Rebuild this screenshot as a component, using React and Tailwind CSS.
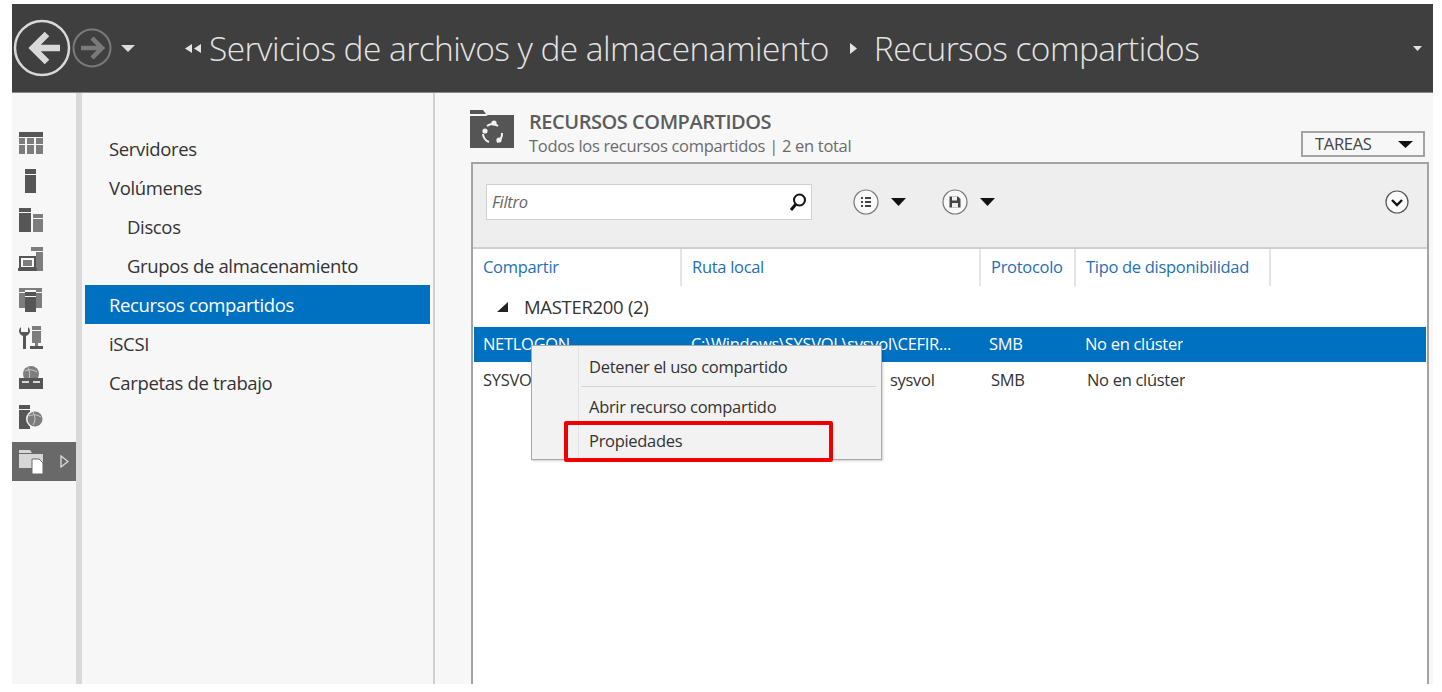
import React from "react";

const font = { fontFamily: '"Open Sans", "Noto Sans", sans-serif' };

function Back() {
  return (
    <svg width="58" height="58" viewBox="0 0 58 58" className="shrink-0">
      <circle cx="29" cy="29" r="27" fill="none" stroke="#d8d8d8" strokeWidth="2.5" />
      <path d="M34 15 L20 29 L34 43 M20 29 H47" fill="none" stroke="#d8d8d8" strokeWidth="6.5" />
    </svg>
  );
}
function Forward() {
  return (
    <svg width="40" height="40" viewBox="0 0 40 40" className="shrink-0">
      <circle cx="20" cy="20" r="18.5" fill="none" stroke="#7a7a7a" strokeWidth="2" />
      <path d="M20 10 L30 20 L20 30 M30 20 H9" fill="none" stroke="#7a7a7a" strokeWidth="4.5" />
    </svg>
  );
}
function Tri({ w = 14, h = 7, color = "#111", className = "" }) {
  return (
    <svg width={w} height={h} viewBox="0 0 14 7" preserveAspectRatio="none" className={"shrink-0 " + className}>
      <path d="M0 0H14L7 7Z" fill={color} />
    </svg>
  );
}
const G1 = "#565656", G2 = "#7d7d7d";
const sideIcons = [
  <g key="a">
    <rect x="0" y="0" width="24" height="5" fill={G1} />
    <rect x="0" y="6" width="6" height="6" fill={G2} /><rect x="8" y="6" width="7" height="6" fill={G2} /><rect x="17" y="6" width="7" height="6" fill={G2} />
    <rect x="0" y="13" width="6" height="9" fill={G2} /><rect x="8" y="13" width="7" height="9" fill={G2} /><rect x="17" y="13" width="7" height="9" fill={G2} />
  </g>,
  <g key="b">
    <rect x="6" y="0" width="11" height="5" fill={G1} /><rect x="6" y="6" width="11" height="18" fill={G1} />
  </g>,
  <g key="c">
    <rect x="0" y="0" width="12" height="4" fill={G1} /><rect x="0" y="5" width="12" height="19" fill={G1} />
    <rect x="14" y="6" width="10" height="4" fill={G2} /><rect x="14" y="11" width="10" height="13" fill={G2} />
  </g>,
  <g key="d">
    <rect x="12" y="0" width="12" height="4" fill={G2} /><rect x="17" y="5" width="7" height="19" fill={G2} />
    <rect x="1" y="10" width="15" height="11" fill="none" stroke={G1} strokeWidth="2" />
    <rect x="4" y="13" width="9" height="6" fill={G2} /><rect x="-1" y="21" width="19" height="3" fill={G1} />
  </g>,
  <g key="e">
    <rect x="0" y="1" width="6" height="4" fill={G2} /><rect x="0" y="6" width="6" height="15" fill={G2} />
    <rect x="17" y="1" width="6" height="4" fill={G2} /><rect x="17" y="6" width="6" height="15" fill={G2} />
    <rect x="6" y="1" width="11" height="2" fill={G2} />
    <rect x="6" y="5" width="11" height="4" fill={G1} /><rect x="6" y="10" width="11" height="15" fill={G1} />
  </g>,
  <g key="f">
    <path d="M2 1 a5 5 0 0 0 0 8 l2 1 v13 h3 V10 l2 -1 a5 5 0 0 0 0 -8 v5 h-7z" fill={G1} />
    <rect x="13" y="0" width="9" height="4" fill={G2} /><rect x="13" y="5" width="9" height="12" fill={G2} />
    <rect x="16" y="17" width="3" height="3" fill={G2} /><rect x="11" y="20" width="13" height="3" fill={G1} />
  </g>,
  <g key="g">
    <circle cx="12" cy="9" r="8" fill={G2} /><path d="M6 6 Q12 3 18 7 M9 2 Q12 9 10 15" fill="none" stroke="#c8c8c8" strokeWidth="1" />
    <rect x="0" y="13" width="24" height="11" fill={G1} />
    <rect x="3" y="16" width="7" height="2" fill="#d8d8d8" /><rect x="14" y="16" width="7" height="2" fill="#d8d8d8" />
  </g>,
  <g key="h">
    <rect x="0" y="0" width="11" height="4" fill={G1} /><rect x="0" y="5" width="11" height="19" fill={G1} />
    <circle cx="16" cy="14" r="9" fill="#f7f7f7" /><circle cx="16" cy="14" r="7.5" fill={G2} />
    <path d="M10 11 Q16 8 22 12 M14 7 Q18 14 14 20" fill="none" stroke="#c8c8c8" strokeWidth="1" />
  </g>,
];
const tops = ["mt-[39px]", "mt-[13px]", "mt-[15px]", "mt-[15px]", "mt-[16px]", "mt-[15px]", "mt-[15px]", "mt-[16px]"];

function Sidebar() {
  return (
    <div className="w-[64px] shrink-0 bg-[#f7f7f7] flex flex-col">
      {sideIcons.map((ic, i) => (
        <svg key={i} width="24" height="24" viewBox="0 0 24 24" className={"ml-[7px] shrink-0 overflow-visible " + tops[i]}>
          {ic}
        </svg>
      ))}
      <div className="mt-[13px] h-[39px] bg-[#696969] flex items-center pl-[7px] gap-[16px]">
        <svg width="25" height="25" viewBox="0 0 25 25">
          <path d="M0 1h11l2 3h11v15H0z" fill="#d6d6d6" />
          <rect x="0" y="4" width="24" height="1" fill="#696969" />
          <path d="M13 10h7l4 4v11H13z" fill="#fff" stroke="#696969" strokeWidth="1" />
        </svg>
        <svg width="9" height="13" viewBox="0 0 9 13">
          <path d="M1 1 L8 6.5 L1 12Z" fill="none" stroke="#d8d8d8" strokeWidth="1.4" />
        </svg>
      </div>
    </div>
  );
}

function Nav() {
  const items = [
    ["Servidores", "pl-[24px]"],
    ["Volúmenes", "pl-[24px]"],
    ["Discos", "pl-[42px]"],
    ["Grupos de almacenamiento", "pl-[42px]"],
    ["Recursos compartidos", "pl-[24px] bg-[#0071c1] text-white mr-[3px]"],
    ["iSCSI", "pl-[24px]"],
    ["Carpetas de trabajo", "pl-[24px]"],
  ];
  return (
    <div className="w-[351px] shrink-0 bg-[#f7f7f7] pt-[36px] pl-[3px]">
      {items.map(([t, c]) => (
        <div key={t} className={"h-[39px] flex items-center text-[18.5px] tracking-[-0.35px] text-[#333] " + c}>{t}</div>
      ))}
    </div>
  );
}

function ShareIcon() {
  return (
    <svg width="44" height="38" viewBox="0 0 44 38" className="shrink-0">
      <path d="M0 0h13l3 4H0z" fill="#555" />
      <path d="M0 6h16l2-1h26v33H0z" fill="#555" />
      <path d="M17 16 a9.5 9.5 0 0 1 11 0 M13 24 a9.5 9.5 0 0 0 6 8 M32 23 a9.5 9.5 0 0 1 -5 9" fill="none" stroke="#f2f2f2" strokeWidth="2" />
      <circle cx="24" cy="13" r="2.6" fill="#f2f2f2" /><circle cx="15" cy="21" r="2.6" fill="#f2f2f2" /><circle cx="29" cy="30" r="2.6" fill="#f2f2f2" />
    </svg>
  );
}
function RoundBtn({ children }) {
  return (
    <svg width="26" height="26" viewBox="0 0 26 26" className="shrink-0">
      <circle cx="13" cy="13" r="12" fill="#f9f9f9" stroke="#777" strokeWidth="1.2" />
      {children}
    </svg>
  );
}

const colHead = "h-[37px] flex items-center text-[16.5px] tracking-[-0.3px] text-[#1f6fb5] pl-[10px] border-r-2 border-[#e4e4e4]";
const cell = "text-[16.5px] tracking-[-0.3px] pl-[10px] overflow-hidden whitespace-nowrap";

function Panel() {
  return (
    <div className="flex-1 mt-[69px] ml-[36px] mr-[4px] border-2 border-b-0 border-[#a3a3a3] bg-white flex flex-col relative">
      <div className="h-[85px] bg-[#eeeeee] border-b-2 border-[#cfcfcf] flex items-start pl-[13px] pr-[18px] pt-[20px] shrink-0">
        <div className="w-[326px] h-[36px] bg-white border border-[#d0d0d0] flex items-center justify-between pl-[5px] pr-[3px]">
          <span className="italic text-[16.5px] tracking-[-0.3px] text-[#666]">Filtro</span>
          <svg width="20" height="20" viewBox="0 0 20 20">
            <circle cx="11.5" cy="8" r="5.5" fill="none" stroke="#111" strokeWidth="2" />
            <path d="M8 12 L3 18" stroke="#111" strokeWidth="3" />
          </svg>
        </div>
        <div className="ml-[41px] mt-[5px] flex items-center">
          <RoundBtn>
            <path d="M8 9h2M8 13h2M8 17h2M12 9h6M12 13h6M12 17h6" stroke="#444" strokeWidth="2" />
          </RoundBtn>
          <Tri className="ml-[12px]" w={15} h={8} />
          <div className="w-[36px]" />
          <RoundBtn>
            <path d="M7.5 7.5h8.5l2.5 2.5v8.5h-11z" fill="#444" />
            <rect x="10" y="7.5" width="5" height="4" fill="#eee" /><rect x="10" y="14" width="6" height="4.5" fill="#eee" />
          </RoundBtn>
          <Tri className="ml-[12px]" w={15} h={8} />
        </div>
        <div className="ml-auto mt-[6px]">
          <svg width="24" height="24" viewBox="0 0 24 24">
            <circle cx="12" cy="12" r="11" fill="#f9f9f9" stroke="#555" strokeWidth="1.2" />
            <path d="M7 10 L12 15 L17 10" fill="none" stroke="#111" strokeWidth="2.4" />
          </svg>
        </div>
      </div>
      <div className="flex shrink-0">
        <div className={colHead + " w-[209px] "}>Compartir</div>
        <div className={colHead + " w-[299px]"}>Ruta local</div>
        <div className={colHead + " w-[95px]"}>Protocolo</div>
        <div className={colHead + " w-[195px]"}>Tipo de disponibilidad</div>
      </div>
      <div className="h-[41px] flex items-center pl-[24px] gap-[16px] text-[#333] text-[18.5px] tracking-[-0.3px] shrink-0">
        <svg width="11" height="10" viewBox="0 0 11 10"><path d="M11 0V10H0Z" fill="#222" /></svg>
        MASTER200 (2)
      </div>
      <div className="h-[35px] ml-[1px] mr-[1px] bg-[#0071c1] text-white flex items-center shrink-0">
        <div className={cell + " w-[208px] -ml-px"}>NETLOGON</div>
        <div className={cell + " w-[298px]"}>C:\Windows\SYSVOL\sysvol\CEFIR...</div>
        <div className={cell + " w-[96px] pl-[9px]"}>SMB</div>
        <div className={cell}>No en clúster</div>
      </div>
      <div className="h-[37px] flex items-center text-[#333] shrink-0">
        <div className={cell + " w-[209px]"}>SYSVOL</div>
        <div className={cell + " w-[299px] pl-[208px]"}>sysvol</div>
        <div className={cell + " w-[96px] pl-[9px]"}>SMB</div>
        <div className={cell}>No en clúster</div>
      </div>
      <ContextMenu />
    </div>
  );
}

function ContextMenu() {
  return (
    <div className="absolute left-[58px] top-[181px] w-[351px] h-[115px] bg-[#f2f2f2] border border-[#a8a8a8] shadow-[1px_1px_2px_rgba(0,0,0,0.2)] text-[16.5px] tracking-[-0.3px] text-[#333]">
      <div className="absolute left-[46px] top-0 bottom-0 w-px bg-[#e2e2e2]" />
      <div className="h-[40px] flex items-center pl-[57px] pt-[2px]">Detener el uso compartido</div>
      <div className="h-px ml-[49px] mr-[5px] bg-[#d4d4d4]" />
      <div className="h-[41px] flex items-center pl-[57px]">Abrir recurso compartido</div>
      <div className="h-[26px] flex items-center pl-[57px]">Propiedades</div>
      <div className="absolute left-[32px] top-[75px] w-[269px] h-[41px] border-[4px] border-[#f00000] rounded-[2px]" />
    </div>
  );
}

function Main() {
  return (
    <div className="flex-1 bg-[#f7f7f7] flex flex-col relative min-w-0">
      <div className="absolute left-[35px] top-[17px] flex items-start gap-[15px]">
        <ShareIcon />
        <div className="-mt-[2px]">
          <div className="text-[20px] font-semibold tracking-[-0.45px] text-[#5c5c5c] leading-[27px]">RECURSOS COMPARTIDOS</div>
          <div className="text-[16.5px] tracking-[-0.3px] text-[#6b6b6b] leading-[22px]">Todos los recursos compartidos | 2 en total</div>
        </div>
      </div>
      <div className="absolute right-[8px] top-[38px] w-[124px] h-[26px] border-2 border-[#a3a3a3] flex items-center justify-between pl-[12px] pr-[10px] text-[16.5px] tracking-[-0.3px] text-[#444]">
        TAREAS
        <Tri w={15} h={7} />
      </div>
      <Panel />
    </div>
  );
}

export default function App() {
  return (
    <div style={font} className="w-[1442px] h-[692px] bg-white pt-[4px] pl-[12px] overflow-hidden">
      <div className="w-[1421px] h-[680px] flex flex-col">
        <div className="h-[89px] shrink-0 bg-[#3f3f3f] border-b border-[#8a8a8a] flex items-center text-[#e4e4e4]">
          <div className="ml-[1px]"><Back /></div>
          <div className="ml-[1px]"><Forward /></div>
          <Tri className="ml-[9px]" w={14} h={7} color="#dcdcdc" />
          <svg width="17" height="9" viewBox="0 0 17 9" className="ml-[50px] shrink-0">
            <path d="M7 0V9L0 4.5ZM16 0V9L9 4.5Z" fill="#e4e4e4" />
          </svg>
          <span className="ml-[7px] text-[33.5px] font-light tracking-[-0.55px] whitespace-nowrap">Servicios de archivos y de almacenamiento</span>
          <svg width="7" height="11" viewBox="0 0 7 11" className="ml-[21px] shrink-0">
            <path d="M0 0L7 5.5L0 11Z" fill="#e4e4e4" />
          </svg>
          <span className="ml-[17px] text-[33.5px] font-light tracking-[-0.55px] whitespace-nowrap">Recursos compartidos</span>
          <Tri className="ml-auto mr-[11px]" w={9} h={5} color="#e4e4e4" />
        </div>
        <div className="flex-1 flex min-h-0">
          <Sidebar />
          <div className="w-[6px] shrink-0 bg-[#d9d9d9]" />
          <Nav />
          <div className="w-[2px] shrink-0 bg-[#d0d0d0]" />
          <Main />
        </div>
      </div>
    </div>
  );
}
